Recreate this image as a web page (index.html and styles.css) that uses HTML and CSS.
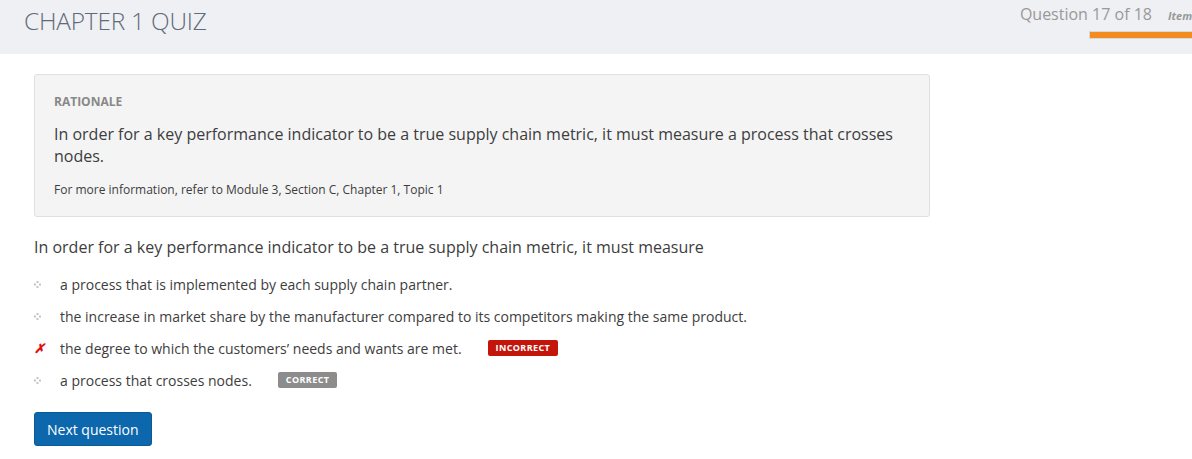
FILE: index.html
```html
<!DOCTYPE html>
<html>
<head>
<meta charset="utf-8">
<link rel="stylesheet" href="styles.css">
</head>
<body>
<header class="topbar">
  <h1 class="title">CHAPTER 1 QUIZ</h1>
  <div class="progress">
    <div class="progress-text"><span class="qcount">Question 17 of 18</span><span class="item">Item</span></div>
    <div class="bar"></div>
  </div>
</header>
<main class="content">
  <section class="rationale">
    <div class="r-label">RATIONALE</div>
    <p class="r-text">In order for a key performance indicator to be a true supply chain metric, it must measure a process that crosses nodes.</p>
    <p class="r-ref">For more information, refer to Module 3, Section C, Chapter 1, Topic 1</p>
  </section>
  <p class="question">In order for a key performance indicator to be a true supply chain metric, it must measure</p>
  <ul class="options">
    <li class="opt"><span class="mark"><svg width="7" height="7" viewBox="0 0 7 7"><rect x="2.5" y="0" width="2" height="2" fill="#c4c4c4"/><rect x="0" y="2.5" width="2" height="2" fill="#c4c4c4"/><rect x="5" y="2.5" width="2" height="2" fill="#c4c4c4"/><rect x="2.5" y="5" width="2" height="2" fill="#c4c4c4"/></svg></span><span>a process that is implemented by each supply chain partner.</span></li>
    <li class="opt"><span class="mark"><svg width="7" height="7" viewBox="0 0 7 7"><rect x="2.5" y="0" width="2" height="2" fill="#c4c4c4"/><rect x="0" y="2.5" width="2" height="2" fill="#c4c4c4"/><rect x="5" y="2.5" width="2" height="2" fill="#c4c4c4"/><rect x="2.5" y="5" width="2" height="2" fill="#c4c4c4"/></svg></span><span>the increase in market share by the manufacturer compared to its competitors making the same product.</span></li>
    <li class="opt"><span class="mark wrong">✗</span><span>the degree to which the customers’ needs and wants are met.</span><span class="badge badge-incorrect">INCORRECT</span></li>
    <li class="opt"><span class="mark"><svg width="7" height="7" viewBox="0 0 7 7"><rect x="2.5" y="0" width="2" height="2" fill="#c4c4c4"/><rect x="0" y="2.5" width="2" height="2" fill="#c4c4c4"/><rect x="5" y="2.5" width="2" height="2" fill="#c4c4c4"/><rect x="2.5" y="5" width="2" height="2" fill="#c4c4c4"/></svg></span><span>a process that crosses nodes.</span><span class="badge badge-correct">CORRECT</span></li>
  </ul>
  <button class="next">Next question</button>
</main>
</body>
</html>
```
FILE: styles.css
```css
* { box-sizing: border-box; }
html, body { margin: 0; padding: 0; background: #fff; overflow: hidden; }
body { font-family: "Open Sans", "Liberation Sans", sans-serif; color: #3d3d3d; width: 1192px; height: 459px; }

.topbar {
  height: 54px;
  background: #eff0f4;
  display: flex;
  justify-content: space-between;
  align-items: flex-start;
  padding-left: 24px;
}
.title {
  margin: 0;
  padding-top: 6px;
  font-weight: 300;
  font-size: 24.4px;
  line-height: 30px;
  color: #5f6b78;
  letter-spacing: -0.2px;
}
.progress {
  display: flex;
  flex-direction: column;
  align-items: flex-end;
  padding-top: 2px;
}
.progress-text {
  display: flex;
  align-items: baseline;
  white-space: nowrap;
}
.qcount {
  font-size: 16px;
  color: #999;
  line-height: 24px;
}
.item {
  font-size: 11px;
  font-style: italic;
  font-weight: 700;
  color: #999;
  margin-left: 16px;
  width: 24px;
  overflow: hidden;
}
.bar {
  margin-top: 5px;
  width: 103px;
  height: 8px;
  background: #f28c1f;
  border: 1px solid #d9d9d9;
  border-right: none;
}

.content {
  padding: 20px 34px 0 34px;
}
.rationale {
  width: 896px;
  background: #f4f4f4;
  border: 1px solid #e0e0e0;
  border-radius: 3px;
  padding: 19px 20px 18px 19px;
}
.r-label {
  font-size: 12px;
  font-weight: 700;
  color: #888;
  line-height: 16px;
}
.r-text {
  margin: 13px 0 0 0;
  font-size: 16px;
  line-height: 22px;
  color: #3d3d3d;
}
.r-ref {
  margin: 15px 0 0 0;
  font-size: 12px;
  line-height: 16px;
  color: #3d3d3d;
}
.question {
  margin: 18px 0 0 0;
  font-size: 16px;
  line-height: 24px;
  color: #3d3d3d;
}
.options {
  list-style: none;
  margin: 9px 0 0 0;
  padding: 0;
}
.opt {
  display: flex;
  align-items: center;
  height: 32px;
  font-size: 14px;
  color: #3d3d3d;
}
.mark {
  width: 26px;
  display: flex;
  align-items: center;
  padding-left: 0;
}
.wrong {
  color: #e01010;
  font-size: 13px;
  font-weight: 700;
  font-style: italic;
}
.badge {
  display: inline-block;
  font-size: 9px;
  font-weight: 700;
  letter-spacing: 0.4px;
  color: #fff;
  padding: 2px 8px;
  line-height: 12px;
  border-radius: 2px;
}
.badge-incorrect {
  background: #c4150c;
  margin-left: 26px;
}
.badge-correct {
  background: #8c8c8c;
  margin-left: 26px;
}
.next {
  margin-top: 16px;
  background: #0c67ac;
  border: 1px solid #0a5a96;
  border-radius: 3px;
  color: #fff;
  font-family: "Open Sans", "Liberation Sans", sans-serif;
  font-size: 14px;
  height: 34px;
  padding: 0 12px;
  cursor: pointer;
}
```
